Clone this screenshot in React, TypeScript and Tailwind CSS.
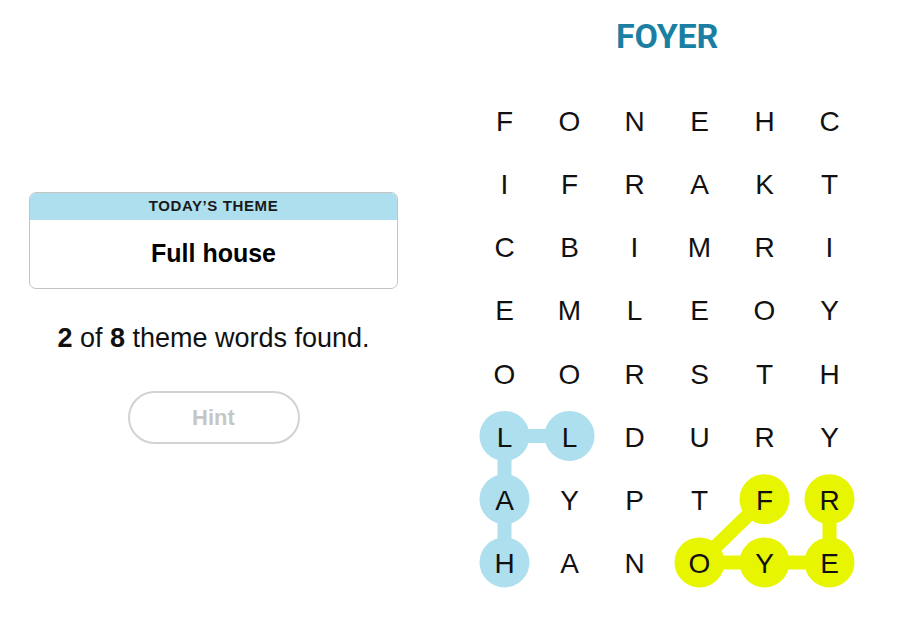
import React from "react";

const rows = [
  "FONEHC",
  "IFRAKT",
  "CBIMRI",
  "EMLEOY",
  "OORSTH",
  "LLDURY",
  "AYPTFR",
  "HANOYE",
];

const CW = 65;
const RH = 63.25;
const cx = (c: number) => CW / 2 + c * CW;
const cy = (r: number) => RH / 2 + r * RH;

// found words: [row, col] paths
const found = [
  { color: "#aedfee", path: [[5, 1], [5, 0], [6, 0], [7, 0]] },
  { color: "#e8f500", path: [[6, 4], [7, 3], [7, 4], [7, 5], [6, 5]] },
];

function Highlights() {
  return (
    <svg className="absolute inset-0" width={390} height={506} viewBox="0 0 390 506">
      {found.map((w, i) => (
        <g key={i} fill={w.color} stroke={w.color}>
          <polyline
            points={w.path.map(([r, c]) => `${cx(c)},${cy(r)}`).join(" ")}
            fill="none"
            strokeWidth={14}
            strokeLinejoin="round"
          />
          {w.path.map(([r, c]) => (
            <circle key={`${r}-${c}`} cx={cx(c)} cy={cy(r)} r={25} stroke="none" />
          ))}
        </g>
      ))}
    </svg>
  );
}

export default function App() {
  return (
    <div className="w-[900px] h-[641px] bg-white flex font-['Liberation_Sans',Arial,sans-serif] text-[#111]">
      {/* left panel */}
      <div className="w-[427px] flex flex-col items-center pt-[192px]">
        <div className="w-[369px] rounded-[7px] border border-[#c4c4c4] overflow-hidden">
          <div className="h-[27px] bg-[#aedfee] flex items-center justify-center text-[15px] font-bold tracking-[0.6px] text-[#1a1a1a]">
            TODAY’S THEME
          </div>
          <div className="h-[68px] flex items-center justify-center text-[25px] font-bold text-black">
            Full house
          </div>
        </div>
        <p className="mt-[33px] text-[27px] leading-[32px] text-[#111]">
          <span className="font-bold">2</span> of <span className="font-bold">8</span> theme words found.
        </p>
        <button className="mt-[37px] w-[172px] h-[53px] rounded-full border-2 border-[#d2d2d2] text-[22px] font-semibold text-[#c6c6c6]">
          Hint
        </button>
      </div>

      {/* right panel */}
      <div className="ml-[45px] w-[390px] flex flex-col items-center">
        <h1 className="mt-[19px] h-[35px] leading-[35px] text-[34px] font-bold text-[#1a7fa3] font-['Roboto',sans-serif] tracking-[-0.3px]">
          FOYER
        </h1>
        <div className="relative mt-[34px] w-[390px] h-[506px]">
          <Highlights />
          <div className="relative grid grid-cols-6 pt-[2px]">
            {rows.map((row, r) =>
              row.split("").map((ch, c) => (
                <div
                  key={`${r}-${c}`}
                  className="h-[63.25px] flex items-center justify-center text-[28px] text-[#111]"
                >
                  {ch}
                </div>
              ))
            )}
          </div>
        </div>
      </div>
    </div>
  );
}
